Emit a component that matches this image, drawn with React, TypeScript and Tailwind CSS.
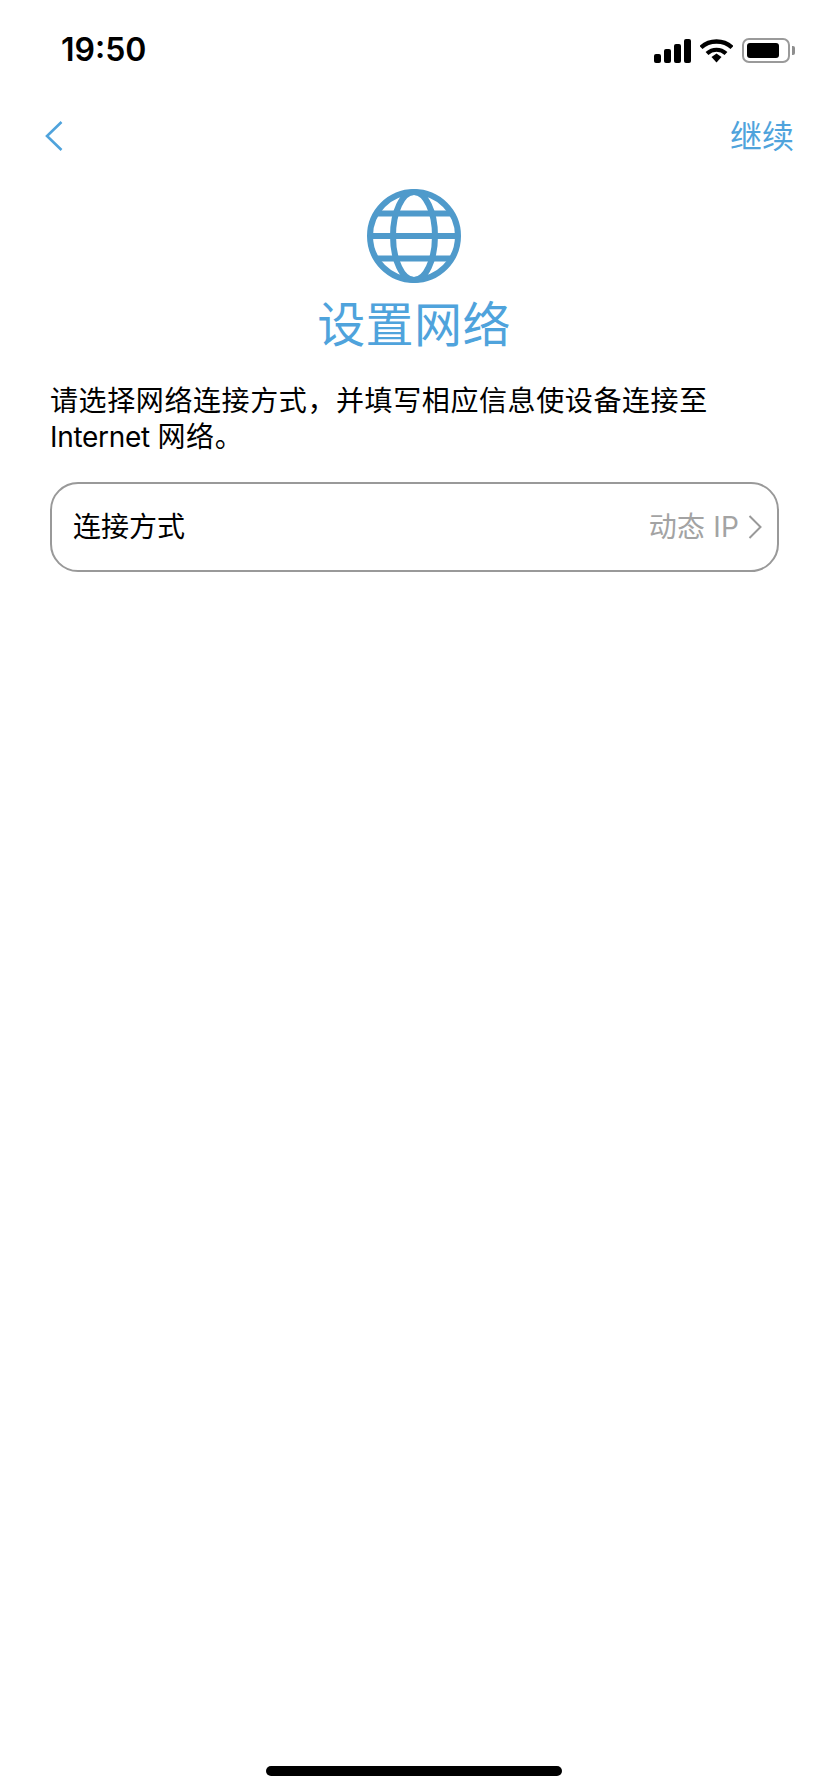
const cjk = "font-['Inter','Noto_Sans_CJK_SC',sans-serif]";

// Signal, wifi and battery cluster in the status bar
const StatusIcons = () => (
  <div className="flex items-center">
    <svg width="38" height="24" viewBox="0 0 38 24" className="mr-[8px]">
      <rect x="0" y="15" width="7" height="9" rx="2" fill="#000" />
      <rect x="10" y="10" width="7" height="14" rx="2" fill="#000" />
      <rect x="20" y="5" width="7" height="19" rx="2" fill="#000" />
      <rect x="30" y="0" width="7" height="24" rx="2" fill="#000" />
    </svg>
    <svg width="33" height="24" viewBox="0 0 33 24" className="mr-[9px]">
      <path d="M1 8.5C9.5 0.5 23.5 0.5 32 8.5" fill="none" stroke="#000" strokeWidth="4.4" />
      <path d="M7 14.5C12.5 9.5 20.5 9.5 26 14.5" fill="none" stroke="#000" strokeWidth="4.2" />
      <path d="M11.5 18L16.5 14.5L21.5 18L16.5 23.5Z" fill="#000" />
    </svg>
    <div className="w-[48px] h-[25px] rounded-[7px] border-2 border-[#9a9a9a] p-[3px] flex">
      <div className="w-[32px] h-full rounded-[3px] bg-black" />
    </div>
    <div className="w-[3px] h-[9px] ml-[2px] rounded-r-[2px] bg-[#8e8e8e]" />
  </div>
);

const Globe = () => (
  <svg width="96" height="96" viewBox="0 0 96 96" fill="none" stroke="#4f9acb" strokeWidth="6">
    <circle cx="48" cy="48" r="44" />
    <ellipse cx="48" cy="48" rx="21" ry="44" />
    <path d="M12 25.5H84M4 48H92M12 70.5H84" />
  </svg>
);

export default function App() {
  return (
    <div className={`${cjk} relative w-[828px] h-[1792px] bg-white text-black overflow-hidden`}>
      <div className="h-[100px] pl-[61px] pr-[33px] flex items-start justify-between">
        <span className="mt-[30px] text-[32px] leading-[40px] font-semibold">19:50</span>
        <div className="mt-[38px]">
          <StatusIcons />
        </div>
      </div>

      <div className="h-[72px] pl-[45px] pr-[34px] flex items-center justify-between">
        <svg width="18" height="30" viewBox="0 0 18 30" fill="none" stroke="#4fa3dc" strokeWidth="2.6">
          <path d="M16.5 1L2 15L16.5 29" />
        </svg>
        <span className="mt-[2px] text-[32px] leading-[44px] text-[#4fa3dc]">继续</span>
      </div>

      <div className="flex flex-col items-center mt-[16px]">
        <Globe />
        <h1 className="mt-[9px] text-[48px] leading-[64px] tracking-[0.4px] font-normal text-[#4fa3dc]">设置网络</h1>
      </div>

      <p className="mt-[26px] mx-[50px] text-[28px] leading-[36px] tracking-[0.6px]">
        请选择网络连接方式，并填写相应信息使设备连接至{" "}
        <span className="tracking-[-0.3px]">Internet </span>网络。
      </p>

      <div className="mt-[27px] ml-[50px] mr-[49px] h-[90px] rounded-[28px] border-2 border-[#999999] pl-[21px] pr-[15px] flex items-center justify-between">
        <span className="text-[28px] leading-[38px]">连接方式</span>
        <div className="flex items-center gap-[9px] text-[#a3a3a3]">
          <span className="text-[28px] leading-[38px] tracking-[0.2px]">动态 IP</span>
          <svg width="14" height="24" viewBox="0 0 14 24" fill="none" stroke="#999999" strokeWidth="2">
            <path d="M1.5 1L12.5 12L1.5 23" />
          </svg>
        </div>
      </div>

      {/* home indicator */}
      <div className="absolute bottom-[16px] left-[266px] w-[296px] h-[10px] rounded-full bg-black" />
    </div>
  );
}
